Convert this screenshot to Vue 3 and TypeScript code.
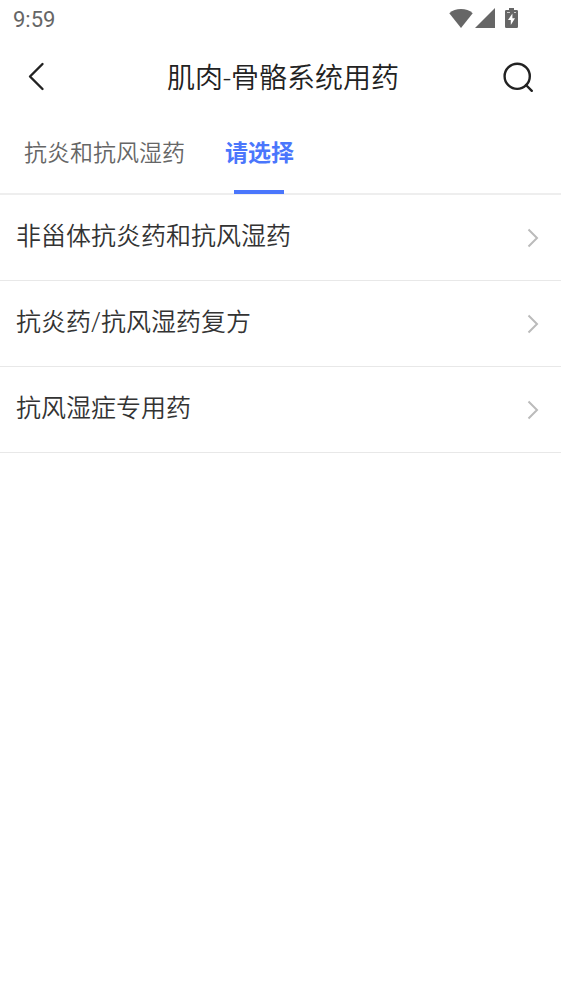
<script setup lang="ts">
import { ref } from 'vue'

interface Tab {
  id: string
  label: string
}

const tabs: Tab[] = [
  { id: 'parent', label: '抗炎和抗风湿药' },
  { id: 'choose', label: '请选择' },
]
const activeTab = ref<string>('choose')

const categories: string[] = [
  '非甾体抗炎药和抗风湿药',
  '抗炎药/抗风湿药复方',
  '抗风湿症专用药',
]
</script>

<template>
  <div class="page">
    <div class="status">
      <span>9:59</span>
      <div class="status-icons">
        <svg width="24" height="20" viewBox="0 0 24 20" aria-hidden="true">
          <path d="M12 20 0.3 5.2C3.4 2.4 7.5 1 12 1s8.600 1.400 11.700 4.200Z" />
        </svg>
        <svg width="20" height="20" viewBox="0 0 20 20" aria-hidden="true">
          <path d="M0 20 20 0V20Z" />
        </svg>
        <svg class="battery" width="13" height="20" viewBox="0 0 13 20" aria-hidden="true">
          <path d="M4 0h5v2h2.700q1.300 0 1.300 1.300v15.400q0 1.300-1.300 1.300H1.300Q0 20 0 18.700V3.300Q0 2 1.300 2H4Z" />
          <path class="bolt" d="M7.400 5.500 3 12h2.800v5L10 10.300H7.400Z" />
          <path class="level" d="M2 4.500h3M9 4.500h2" />
        </svg>
      </div>
    </div>

    <header class="header">
      <button class="icon-button" type="button" aria-label="返回">
        <svg width="40" height="40" viewBox="0 0 40 40" aria-hidden="true">
          <path d="M26.500 8 14 20.500 26.500 33" />
        </svg>
      </button>
      <h1>肌肉-骨骼系统用药</h1>
      <button class="icon-button" type="button" aria-label="搜索">
        <svg width="40" height="40" viewBox="0 0 40 40" aria-hidden="true">
          <circle cx="21.200" cy="20.300" r="12.600" />
          <path d="M30 29 35.800 34.800" />
        </svg>
      </button>
    </header>

    <nav class="tabs">
      <button
        v-for="tab in tabs"
        :key="tab.id"
        type="button"
        class="tab"
        :class="{ active: tab.id === activeTab }"
        @click="activeTab = tab.id"
      >
        {{ tab.label }}
      </button>
    </nav>

    <ul class="list">
      <li v-for="name in categories" :key="name">
        <button class="row" type="button">
          <span>{{ name }}</span>
          <svg width="12" height="20" viewBox="0 0 12 20" aria-hidden="true">
            <path d="M1.500 1.500 10 10 1.500 18.500" />
          </svg>
        </button>
      </li>
    </ul>
  </div>
</template>

<style>
body {
  background: #fff;
}
</style>

<style scoped>
.page {
  font-family: Roboto, "Noto Sans CJK SC", sans-serif;
  font-weight: 350;
  color: #333;
}

button {
  margin: 0;
  padding: 0;
  border: 0;
  background: none;
  color: inherit;
  font: inherit;
  cursor: pointer;
}

svg {
  display: block;
  flex: none;
}

.status {
  display: flex;
  align-items: center;
  justify-content: space-between;
  height: 38px;
  padding: 0 43px 0 13px;
  font-size: 22px;
  font-weight: 400;
  color: #666;
}

.status-icons {
  display: flex;
  align-items: center;
  gap: 2px;
  padding-bottom: 2px;
  fill: #666;
}

.battery {
  margin-left: 8px;
}

.bolt {
  fill: #fff;
}

.level {
  stroke: #ccc;
}

.header {
  display: flex;
  align-items: center;
  justify-content: space-between;
  height: 76px;
  padding: 0 25px 0 16px;
}

.header h1 {
  margin: 0;
  padding: 6px 0 0 14px;
  font-size: 28px;
  font-weight: inherit;
  line-height: 40px;
  color: #222;
}

.icon-button svg {
  fill: none;
  stroke: #222;
  stroke-width: 2.4;
  stroke-linecap: round;
  stroke-linejoin: round;
}

.tabs {
  display: flex;
  gap: 40px;
  height: 79px;
  padding: 0 24px;
  border-bottom: 2px solid #eee;
}

.tab {
  position: relative;
  font-size: 23px;
  line-height: 80px;
  color: #666;
}

.tab.active {
  font-weight: 700;
  color: #4a76fc;
}

.tab.active::after {
  content: "";
  position: absolute;
  bottom: -1px;
  left: 50%;
  width: 50px;
  height: 4px;
  margin-left: -26px;
  background: #4a76fc;
}

.list {
  margin: 0;
  padding: 0;
  list-style: none;
}

.row {
  display: flex;
  align-items: center;
  justify-content: space-between;
  width: 100%;
  height: 86px;
  padding: 0 22px 0 16px;
  border-bottom: 1px solid #e8e8e8;
  font-size: 25px;
  text-align: left;
}

.row span {
  padding-bottom: 8px;
}

.row svg {
  fill: none;
  stroke: #bbb;
  stroke-width: 2;
}
</style>
